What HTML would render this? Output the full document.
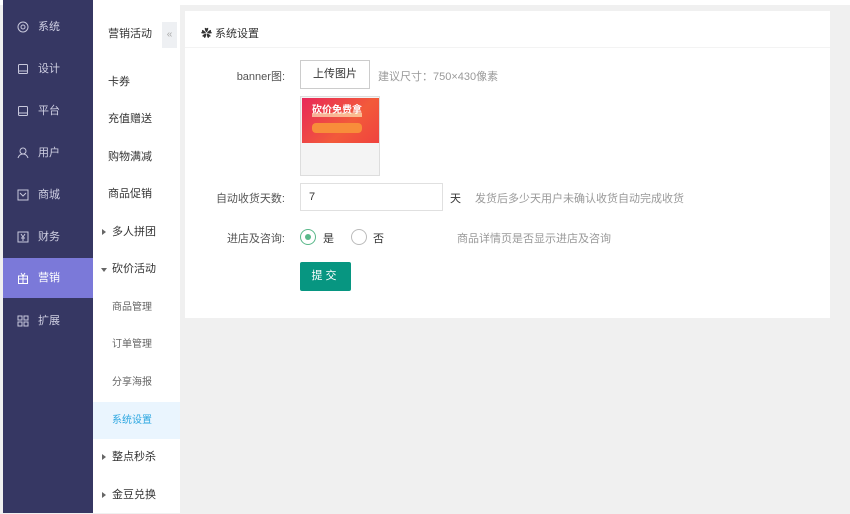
<!DOCTYPE html><html><head><meta charset="utf-8"><style>
*{margin:0;padding:0;box-sizing:border-box}
body{width:850px;height:513px;overflow:hidden;background:#f0f0f0;font-family:"Liberation Sans","Noto Sans CJK SC",sans-serif;font-size:12px;color:#333;position:relative}
.top{position:absolute;left:0;top:0;width:850px;height:5px;background:#fff}
.side{position:absolute;left:3px;top:0;width:90px;height:513px;background:#363763}
.si{position:absolute;left:0;width:90px;height:40px;color:#cfcfe2;font-size:11px;line-height:40px;padding-left:35px}
.si svg{position:absolute;left:14px;top:14px}
.si.act{background:#7b79d9;color:#fff}
.sub{position:absolute;left:93px;top:5px;width:87px;height:508px;background:#fff}
.sm{position:absolute;left:0;width:87px;height:37px;line-height:37px;font-size:11px;color:#333;padding-left:15px}
.sm.c{padding-left:19px;color:#666;font-size:10px}
.sm.a{background:#eaf5fe;color:#2ba6e0}
.tri{position:absolute;left:9px;top:15px;width:0;height:0;border-left:4px solid #666;border-top:3px solid transparent;border-bottom:3px solid transparent}
.tri.d{border-top:4px solid #666;border-left:3px solid transparent;border-right:3px solid transparent;border-bottom:0;top:17px;left:8px}
.col{position:absolute;left:162px;top:22px;width:15px;height:26px;background:#eef0f3;color:#aaa;font-size:10px;text-align:center;line-height:26px}
.card{position:absolute;left:185px;top:11px;width:645px;height:307px;background:#fff}
.ht{position:absolute;left:16px;top:14px;font-size:11px;color:#333}
.hl{position:absolute;left:0;top:36px;width:645px;height:1px;background:#f3f3f3}
.lab{position:absolute;font-size:11px;color:#555;text-align:right;width:100px}
.btn{position:absolute;left:115px;top:49px;width:70px;height:29px;border:1px solid #ccc;text-align:center;line-height:27px;font-size:11px}
.g{position:absolute;color:#999;font-size:11px}
.img{position:absolute;left:115px;top:85px;width:80px;height:80px;border:1px solid #ddd;background:#f4f4f4}
.inp{position:absolute;left:115px;top:172px;width:143px;height:28px;border:1px solid #e0e0e0;padding-left:8px;line-height:26px;font-size:11px}
.rad{position:absolute;width:16px;height:16px;border-radius:50%;border:1px solid #bbb}
.sub2{position:absolute;left:115px;top:251px;width:51px;height:29px;background:#079681;color:#fff;text-align:center;line-height:29px;font-size:11px;border-radius:2px;letter-spacing:3px}
</style></head><body>
<div class="top"></div>
<div class="side">
<div class="si" style="top:7px"><svg width="12" height="12" viewBox="0 0 12 12" fill="none" stroke="#c8c8dc"><circle cx="6" cy="6" r="5"/><circle cx="6" cy="6" r="2"/></svg>系统</div>
<div class="si" style="top:49px"><svg width="12" height="12" viewBox="0 0 12 12" fill="none" stroke="#c8c8dc"><rect x="1.5" y="1.5" width="9" height="9" rx="1"/><path d="M2 8h8"/></svg>设计</div>
<div class="si" style="top:91px"><svg width="12" height="12" viewBox="0 0 12 12" fill="none" stroke="#c8c8dc"><rect x="1.5" y="1.5" width="9" height="9" rx="1"/><path d="M2 8h8"/></svg>平台</div>
<div class="si" style="top:133px"><svg width="12" height="12" viewBox="0 0 12 12" fill="none" stroke="#c8c8dc"><circle cx="6" cy="4" r="3"/><path d="M1 11c1-3 3-4 5-4s4 1 5 4"/></svg>用户</div>
<div class="si" style="top:175px"><svg width="12" height="12" viewBox="0 0 12 12" fill="none" stroke="#c8c8dc"><rect x="1" y="1" width="10" height="10"/><path d="M3 4l3 3 3-3"/></svg>商城</div>
<div class="si" style="top:217px"><svg width="12" height="12" viewBox="0 0 12 12" fill="none" stroke="#c8c8dc"><rect x="1" y="1" width="10" height="10"/><path d="M4 3l2 3 2-3M6 6v4M4 7h4"/></svg>财务</div>
<div class="si act" style="top:258px"><svg width="12" height="12" viewBox="0 0 12 12" fill="none" stroke="#fff"><rect x="1.5" y="4" width="9" height="7.5"/><path d="M6 4v7.5M1.5 7h9M4 1l2 3 2-3"/></svg>营销</div>
<div class="si" style="top:301px"><svg width="12" height="12" viewBox="0 0 12 12" fill="none" stroke="#c8c8dc"><rect x="1" y="1" width="4" height="4"/><rect x="7" y="1" width="4" height="4"/><rect x="1" y="7" width="4" height="4"/><rect x="7" y="7" width="4" height="4"/></svg>扩展</div>
</div>
<div class="sub">
<div class="sm" style="top:11px">营销活动</div>
<div class="sm" style="top:59px">卡券</div>
<div class="sm" style="top:96px">充值赠送</div>
<div class="sm" style="top:134px">购物满减</div>
<div class="sm" style="top:171px">商品促销</div>
<div class="sm" style="top:209px;padding-left:19px"><span class="tri"></span>多人拼团</div>
<div class="sm" style="top:246px;padding-left:19px"><span class="tri d"></span>砍价活动</div>
<div class="sm c" style="top:284px">商品管理</div>
<div class="sm c" style="top:321px">订单管理</div>
<div class="sm c" style="top:359px">分享海报</div>
<div class="sm c a" style="top:397px">系统设置</div>
<div class="sm" style="top:434px;padding-left:19px"><span class="tri"></span>整点秒杀</div>
<div class="sm" style="top:472px;padding-left:19px"><span class="tri"></span>金豆兑换</div>
</div>
<div class="col">«</div>
<div class="card">
<div class="ht">✿ 系统设置</div>
<div class="hl"></div>
<div class="lab" style="left:0;top:57px">banner图:</div>
<div class="btn">上传图片</div>
<div class="g" style="left:193px;top:57px">建议尺寸：750×430像素</div>
<div class="img"><div style="position:absolute;left:1px;top:1px;width:77px;height:45px;background:linear-gradient(135deg,#e8285a,#f25a3a 60%,#f0423e)"><div style="color:#fff;font-size:10px;font-weight:bold;padding:3px 0 0 10px">砍价免费拿</div><div style="position:absolute;left:10px;top:15px;width:50px;height:4px;background:#ffc;opacity:.6"></div><div style="position:absolute;left:10px;top:25px;width:50px;height:10px;background:#f88d3a;border-radius:4px"></div></div></div>
<div class="lab" style="left:0;top:179px">自动收货天数:</div>
<div class="inp">7</div>
<div style="position:absolute;left:265px;top:179px;font-size:11px">天</div>
<div class="g" style="left:290px;top:179px">发货后多少天用户未确认收货自动完成收货</div>
<div class="lab" style="left:0;top:219px">进店及咨询:</div>
<div class="rad" style="left:115px;top:218px;border-color:#5ab88a"><div style="position:absolute;left:4px;top:4px;width:6px;height:6px;border-radius:50%;background:#5ab88a"></div></div>
<div style="position:absolute;left:138px;top:219px;font-size:11px">是</div>
<div class="rad" style="left:166px;top:218px"></div>
<div style="position:absolute;left:188px;top:219px;font-size:11px">否</div>
<div class="g" style="left:272px;top:219px">商品详情页是否显示进店及咨询</div>
<div class="sub2">提交</div>
</div>
</body></html>
